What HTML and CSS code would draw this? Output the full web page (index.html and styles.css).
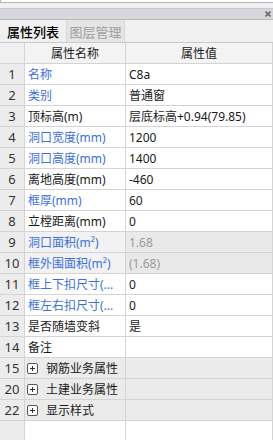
FILE: index.html
```html
<!DOCTYPE html>
<html lang="zh">
<head>
<meta charset="utf-8">
<link rel="stylesheet" href="styles.css">
</head>
<body>
<div class="top"><span class="top-text">C8</span></div>
<div class="gap"></div>
<div class="titlebar">
  <svg class="close" width="6" height="6" viewBox="0 0 6 6"><path d="M0.5 0.5L5.5 5.5M5.5 0.5L0.5 5.5" stroke="#6a6a6a" stroke-width="1.6"/></svg>
</div>
<div class="tabs">
  <div class="tab active">属性列表</div>
  <div class="tab inactive">图层管理</div>
</div>
<div class="grid">
  <div class="row head"><div class="num"></div><div class="name c">属性名称</div><div class="val c">属性值</div></div>
  <div class="row"><div class="num">1</div><div class="name blue">名称</div><div class="val">C8a</div></div>
  <div class="row"><div class="num">2</div><div class="name blue">类别</div><div class="val">普通窗</div></div>
  <div class="row"><div class="num">3</div><div class="name">顶标高(m)</div><div class="val">层底标高+0.94(79.85)</div></div>
  <div class="row"><div class="num">4</div><div class="name blue">洞口宽度(mm)</div><div class="val">1200</div></div>
  <div class="row"><div class="num">5</div><div class="name blue">洞口高度(mm)</div><div class="val">1400</div></div>
  <div class="row"><div class="num">6</div><div class="name">离地高度(mm)</div><div class="val">-460</div></div>
  <div class="row"><div class="num">7</div><div class="name blue">框厚(mm)</div><div class="val">60</div></div>
  <div class="row"><div class="num">8</div><div class="name">立樘距离(mm)</div><div class="val">0</div></div>
  <div class="row ro"><div class="num">9</div><div class="name blue">洞口面积(m²)</div><div class="val">1.68</div></div>
  <div class="row ro"><div class="num">10</div><div class="name blue">框外围面积(m²)</div><div class="val">(1.68)</div></div>
  <div class="row"><div class="num">11</div><div class="name blue">框上下扣尺寸(...</div><div class="val">0</div></div>
  <div class="row"><div class="num">12</div><div class="name blue">框左右扣尺寸(...</div><div class="val">0</div></div>
  <div class="row"><div class="num">13</div><div class="name">是否随墙变斜</div><div class="val">是</div></div>
  <div class="row"><div class="num">14</div><div class="name">备注</div><div class="val"></div></div>
  <div class="row grp"><div class="num">15</div><div class="name"><span class="plus"></span>钢筋业务属性</div><div class="val"></div></div>
  <div class="row grp"><div class="num">20</div><div class="name"><span class="plus"></span>土建业务属性</div><div class="val"></div></div>
  <div class="row grp"><div class="num">22</div><div class="name"><span class="plus"></span>显示样式</div><div class="val"></div></div>
  <div class="row"><div class="num"></div><div class="name"></div><div class="val"></div></div>
</div>
</body>
</html>
```

FILE: styles.css
```css
* { box-sizing: border-box; }
html, body {
  margin: 0;
  padding: 0;
  background: #f0f0f0;
  font-family: "Noto Sans", "Noto Sans CJK SC", sans-serif;
  font-size: 12px;
  color: #1a1a1a;
  overflow: hidden;
}
.top {
  height: 3px;
  background: #fff;
  border-bottom: 1px solid #b4b4b4;
  border-left: 1px solid #b4b4b4;
  overflow: hidden;
  padding-left: 46px;
}
.top-text {
  display: block;
  line-height: 12px;
  margin-top: -10px;
}
.gap { height: 5px; background: #f0f0f0; }
.titlebar {
  height: 12px;
  background: #d6d8dc;
  border-top: 1px solid #c8cacd;
  border-bottom: 1px solid #b8babd;
  display: flex;
  justify-content: flex-end;
  align-items: center;
  padding-right: 2px;
}
.close { display: block; }
.tabs {
  height: 23px;
  display: flex;
  border-bottom: 1px solid #c9c9c9;
  background: #f0f0f0;
}
.tab {
  display: flex;
  align-items: center;
  justify-content: center;
  font-size: 13px;
}
.tab.active { width: 67px; color: #000; border-right: 1px solid #d8d8d8; font-weight: 500; }
.tab.inactive { width: 58px; color: #a0a0a0; background: #e4e4e4; border-right: 1px solid #d8d8d8; }
.grid { display: flex; flex-direction: column; }
.row {
  display: grid;
  grid-template-columns: 25px 101px 1fr;
  height: 21px;
  border-bottom: 1px solid #d4d4d4;
  background: #fff;
}
.row > div {
  display: flex;
  align-items: center;
  white-space: nowrap;
  overflow: hidden;
  border-right: 1px solid #d4d4d4;
}
.num {
  justify-content: center;
  background: #ececec;
  color: #333;
  font-size: 13px;
}
.name { padding-left: 3px; }
.val { padding-left: 3px; }
.c { justify-content: center; padding-left: 0; }
.head { background: #f3f3f3; }
.head .num { background: #f0f0f0; }
.blue { color: #3b6fe0; }
.ro .name { background: #f2f2f2; }
.ro .val { background: #e9e9e9; color: #9a9a9a; }
.grp { background: #ebebeb; }
.grp .name { padding-left: 2px; }
.plus {
  width: 11px;
  height: 11px;
  border: 1px solid #555;
  border-radius: 2px;
  margin-right: 8px;
  position: relative;
  background: #fff;
  flex: none;
}
.plus::before, .plus::after {
  content: "";
  position: absolute;
  background: #333;
}
.plus::before { left: 2px; top: 4px; width: 5px; height: 1px; }
.plus::after { left: 4px; top: 2px; width: 1px; height: 5px; }
```
